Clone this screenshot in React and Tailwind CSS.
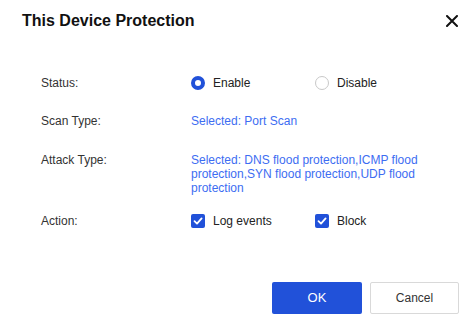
import React, { useState } from 'react';

const Radio = ({ checked, label, onClick }) => (
    <button type="button" onClick={onClick} className="w-[124px] flex items-center gap-[8px] text-left">
        <span
            className={`w-[14px] h-[14px] rounded-full shrink-0 ${checked ? 'border-[4px] border-[#2151d9] bg-white' : 'border border-[#c8c8c8] bg-white'}`}
        />
        <span className="text-[12px] text-[#222]">{label}</span>
    </button>
);

const Checkbox = ({ checked, label, onClick }) => (
    <button type="button" onClick={onClick} className="w-[124px] flex items-center gap-[8px] text-left">
        <span className={`w-[14px] h-[14px] rounded-[2px] shrink-0 flex items-center justify-center ${checked ? 'bg-[#2151d9]' : 'border border-[#c8c8c8]'}`}>
            {checked && (
                <svg width="10" height="10" viewBox="0 0 10 10" fill="none">
                    <path d="M1.5 5.2 L4 7.6 L8.6 2.4" stroke="white" strokeWidth="1.8" strokeLinecap="round" strokeLinejoin="round" />
                </svg>
            )}
        </span>
        <span className="text-[12px] text-[#222]">{label}</span>
    </button>
);

export default function App() {
    const [status, setStatus] = useState('enable');
    const [logEvents, setLogEvents] = useState(true);
    const [block, setBlock] = useState(true);

    return (
        <div className="w-[475px] h-[331px] bg-white font-['Liberation_Sans',Arial,sans-serif] text-[#333]">
            {/* Header */}
            <div className="flex items-center justify-between pl-[22px] pr-[17px] pt-[11px] h-[42px] items-start">
                <h1 className="text-[16px] leading-[20px] font-bold text-[#111]">This Device Protection</h1>
                <button type="button" className="mt-[4px] w-[12px] h-[12px] flex items-center justify-center">
                    <svg width="12" height="12" viewBox="0 0 12 12">
                        <path d="M1 1 L11 11 M11 1 L1 11" stroke="#111" strokeWidth="2" strokeLinecap="round" />
                    </svg>
                </button>
            </div>

            {/* Body */}
            <div className="pl-[41px] pt-[31px]">
                <div className="flex items-center h-5">
                    <div className="w-[150px] text-[12px] text-[#333]">Status:</div>
                    <div className="flex items-center">
                        <Radio checked={status === 'enable'} label="Enable" onClick={() => setStatus('enable')} />
                        <Radio checked={status === 'disable'} label="Disable" onClick={() => setStatus('disable')} />
                    </div>
                </div>

                <div className="flex items-center h-5 mt-[18px]">
                    <div className="w-[150px] text-[12px] text-[#333]">Scan Type:</div>
                    <div className="text-[12px] text-[#3d6df2]">Selected: Port Scan</div>
                </div>

                <div className="flex items-start mt-[22px] leading-[14px]">
                    <div className="w-[150px] text-[12px] text-[#333]">Attack Type:</div>
                    <div className="w-[240px] text-[12px] text-[#3d6df2]">
                        Selected: DNS flood protection,ICMP flood protection,SYN flood protection,UDP flood protection
                    </div>
                </div>

                <div className="flex items-center h-5 mt-[16px]">
                    <div className="w-[150px] text-[12px] text-[#333]">Action:</div>
                    <div className="flex items-center">
                        <Checkbox checked={logEvents} label="Log events" onClick={() => setLogEvents(!logEvents)} />
                        <Checkbox checked={block} label="Block" onClick={() => setBlock(!block)} />
                    </div>
                </div>
            </div>

            {/* Footer */}
            <div className="flex justify-end gap-[8px] pr-[16px] mt-[51px]">
                <button type="button" className="w-[90px] h-[32px] rounded-[2px] bg-[#2151d9] text-white text-[13px]">
                    OK
                </button>
                <button type="button" className="w-[89px] h-[32px] rounded-[2px] border border-[#d9d9d9] bg-white text-[#333] text-[12px]">
                    Cancel
                </button>
            </div>
        </div>
    );
}
